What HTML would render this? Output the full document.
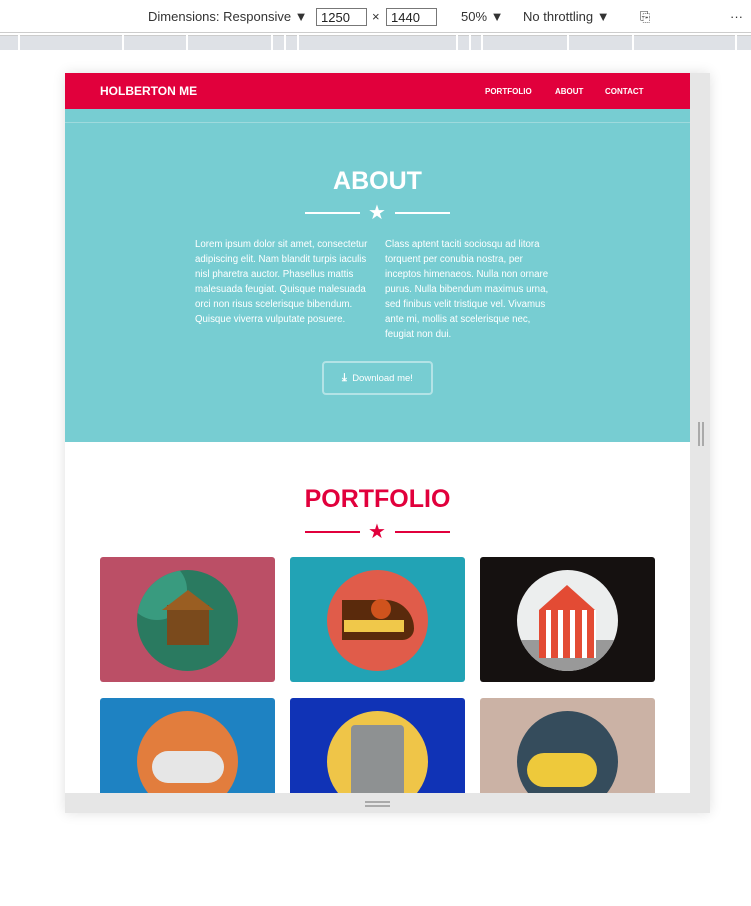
<!DOCTYPE html>
<html><head><meta charset="utf-8"><style>
*{margin:0;padding:0;box-sizing:border-box}
body{width:751px;height:906px;background:#fff;position:relative;overflow:hidden;font-family:"Liberation Sans",sans-serif}
.abs{position:absolute}
.tb{font-size:13px;color:#333;top:9px}
.inp{border:1px solid #777;height:18px;top:8px;font-size:13px;padding:1px 4px;color:#222}
.ruler{top:35px;left:0;width:751px;height:15px;background:#dee1e6;border-top:1px solid #ccc}
.tick{top:35px;width:2px;height:15px;background:#fff}
.nav{color:#fff;font-weight:bold;font-size:8px;top:87px}
p.t{color:#fff;font-size:9.7px;line-height:15px;white-space:nowrap;letter-spacing:0}
.card{width:175px;height:125px;border-radius:3px;overflow:hidden}
.circ{position:absolute;left:37px;top:13px;width:101px;height:101px;border-radius:50%;overflow:hidden}
</style></head><body>
<div class="abs tb" style="left:148px">Dimensions: Responsive &#9660;</div>
<div class="abs inp" style="left:316px;width:51px">1250</div>
<div class="abs tb" style="left:372px">×</div>
<div class="abs inp" style="left:386px;width:51px">1440</div>
<div class="abs tb" style="left:461px">50% &#9660;</div>
<div class="abs tb" style="left:523px">No throttling &#9660;</div>
<div class="abs tb" style="left:640px">⎘</div>
<div class="abs tb" style="left:730px">···</div>
<div class="abs" style="top:32px;left:0;width:751px;height:1px;background:#ccc"></div>
<div class="abs ruler"></div>
<div class="abs tick" style="left:18px"></div><div class="abs tick" style="left:122px"></div><div class="abs tick" style="left:186px"></div><div class="abs tick" style="left:271px"></div><div class="abs tick" style="left:284px"></div><div class="abs tick" style="left:297px"></div><div class="abs tick" style="left:456px"></div><div class="abs tick" style="left:469px"></div><div class="abs tick" style="left:481px"></div><div class="abs tick" style="left:567px"></div><div class="abs tick" style="left:632px"></div><div class="abs tick" style="left:735px"></div>

<div class="abs" style="left:65px;top:73px;width:645px;height:740px;background:#e6e6e6;box-shadow:0 0 12px rgba(0,0,0,.12)"></div>
<div class="abs" style="left:65px;top:73px;width:625px;height:720px;background:#fff;overflow:hidden">
 <div class="abs" style="left:0;top:0;width:625px;height:36px;background:#e1003c"></div>
 <div class="abs" style="left:35px;top:11px;color:#fff;font-weight:bold;font-size:12px">HOLBERTON ME</div>
 <div class="abs" style="left:0;top:36px;width:625px;height:333px;background:#77cdd2"></div>
 <div class="abs" style="left:0;top:49px;width:625px;height:1px;background:#9edadd"></div>
 <div class="abs" style="left:0;top:94px;width:625px;text-align:center;color:#fff;font-weight:bold;font-size:25px">ABOUT</div>
 <div class="abs" style="left:240px;top:139px;width:55px;height:2px;background:#fff"></div>
 <div class="abs" style="left:330px;top:139px;width:55px;height:2px;background:#fff"></div>
 <div class="abs" style="left:303px;top:127px;color:#fff;font-size:20px">★</div>
 <p class="abs t" style="left:130px;top:164px">Lorem ipsum dolor sit amet, consectetur<br>adipiscing elit. Nam blandit turpis iaculis<br>nisl pharetra auctor. Phasellus mattis<br>malesuada feugiat. Quisque malesuada<br>orci non risus scelerisque bibendum.<br>Quisque viverra vulputate posuere.</p>
 <p class="abs t" style="left:320px;top:164px">Class aptent taciti sociosqu ad litora<br>torquent per conubia nostra, per<br>inceptos himenaeos. Nulla non ornare<br>purus. Nulla bibendum maximus urna,<br>sed finibus velit tristique vel. Vivamus<br>ante mi, mollis at scelerisque nec,<br>feugiat non dui.</p>
 <div class="abs" style="left:257px;top:288px;width:111px;height:34px;border:2px solid #b3e3e6;border-radius:4px;color:#fff;font-size:9.5px;text-align:center;line-height:30px"><b style="font-size:11px">⤓</b>&nbsp; Download me!</div>
 <div class="abs" style="left:0;top:412px;width:625px;text-align:center;color:#e1003c;font-weight:bold;font-size:25px">PORTFOLIO</div>
 <div class="abs" style="left:240px;top:458px;width:55px;height:2px;background:#e1003c"></div>
 <div class="abs" style="left:330px;top:458px;width:55px;height:2px;background:#e1003c"></div>
 <div class="abs" style="left:303px;top:446px;color:#e1003c;font-size:20px">★</div>

 <div class="abs card" style="left:35px;top:484px;background:#bb4f66"><div class="circ" style="background:#2a7a60"><div class="abs" style="left:-10px;top:-10px;width:60px;height:60px;border-radius:50%;background:#44b095;opacity:.6"></div><div class="abs" style="left:30px;top:35px;width:42px;height:40px;background:#7a4a1c"></div><div class="abs" style="left:25px;top:20px;width:0;height:0;border-left:26px solid transparent;border-right:26px solid transparent;border-bottom:20px solid #9a5e22"></div></div></div>
 <div class="abs card" style="left:225px;top:484px;background:#22a3b5"><div class="circ" style="background:#e05c4a"><div class="abs" style="left:15px;top:30px;width:72px;height:40px;background:#5a2a0c;border-radius:0 30px 12px 0"></div><div class="abs" style="left:17px;top:50px;width:60px;height:12px;background:#f0c84a"></div><div class="abs" style="left:44px;top:29px;width:20px;height:20px;border-radius:50%;background:#d0531d"></div></div></div>
 <div class="abs card" style="left:415px;top:484px;background:#151110"><div class="circ" style="background:#eceeee"><div class="abs" style="left:0;top:70px;width:101px;height:31px;background:#999"></div><div class="abs" style="left:22px;top:40px;width:57px;height:48px;background:repeating-linear-gradient(90deg,#e34b34 0 7px,#fff 7px 12px)"></div><div class="abs" style="left:22px;top:15px;width:0;height:0;border-left:28px solid transparent;border-right:28px solid transparent;border-bottom:25px solid #e34b34"></div></div></div>
 <div class="abs card" style="left:35px;top:625px;background:#1e82c2"><div class="circ" style="background:#e27d3d"><div class="abs" style="left:15px;top:40px;width:72px;height:32px;border-radius:16px;background:#e6e6e6"></div></div></div>
 <div class="abs card" style="left:225px;top:625px;background:#1033b6"><div class="circ" style="background:#efc548"><div class="abs" style="left:24px;top:14px;width:53px;height:90px;background:#8e9192;border-radius:4px"></div></div></div>
 <div class="abs card" style="left:415px;top:625px;background:#cbb2a5"><div class="circ" style="background:#354c5c"><div class="abs" style="left:10px;top:42px;width:70px;height:34px;border-radius:17px;background:#eec93b"></div></div></div>
</div>
<div class="abs nav" style="left:485px">PORTFOLIO</div>
<div class="abs nav" style="left:555px">ABOUT</div>
<div class="abs nav" style="left:605px">CONTACT</div>
<div class="abs" style="left:365px;top:801px;width:25px;height:2px;background:#aaa"></div>
<div class="abs" style="left:365px;top:805px;width:25px;height:2px;background:#aaa"></div>
<div class="abs" style="left:698px;top:422px;width:2px;height:24px;background:#aaa"></div>
<div class="abs" style="left:702px;top:422px;width:2px;height:24px;background:#aaa"></div>
</body></html>
